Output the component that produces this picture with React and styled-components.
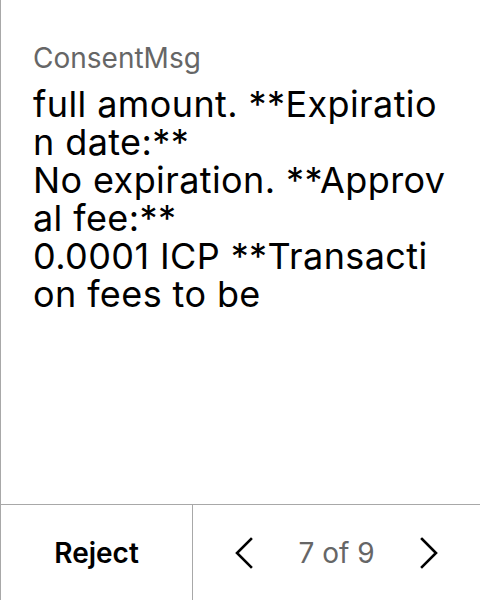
import React from 'react';
import styled, {createGlobalStyle} from 'styled-components';

const GlobalStyle = createGlobalStyle`
  html, body {
    margin: 0;
    padding: 0;
    background: #fff;
  }
  body {
    font-family: Inter, "Noto Sans", sans-serif;
    color: #000;
  }
`

const Screen = styled.div`
  width: 480px;
  height: 600px;
  display: flex;
  flex-direction: column;
  border-left: 1px solid #a8a8a8;
  box-sizing: border-box;
  overflow: hidden;
`

const Content = styled.div`
  flex: 1;
  padding: 42px 12px 0 32px;
  overflow: hidden;
`

const Title = styled.div`
  font-size: 28px;
  line-height: 32px;
  color: #666;
`

const Body = styled.div`
  font-size: 36px;
  line-height: 38px;
  letter-spacing: 0.4px;
  white-space: pre-line;
  word-break: break-all;
  margin-top: 11px;
`

const Footer = styled.div`
  height: 96px;
  box-sizing: border-box;
  flex-shrink: 0;
  border-top: 1px solid #a8a8a8;
  display: flex;
`

const RejectButton = styled.div`
  width: 191px;
  border-right: 1px solid #a8a8a8;
  display: flex;
  align-items: center;
  justify-content: center;
  font-size: 28px;
  font-weight: 600;
`

const Pager = styled.div`
  flex: 1;
  display: flex;
  align-items: center;
  justify-content: space-between;
  padding: 0 40px;
`

const PageLabel = styled.span`
  font-size: 28px;
  color: #666;
`

const Chevron = ({dir}) => (
    <svg width="22" height="32" viewBox="0 0 22 32" fill="none" stroke="#000" strokeWidth="2.6"
         strokeLinecap="square">
        {dir === 'left'
            ? <polyline points="18,2 4,16 18,30"/>
            : <polyline points="4,2 18,16 4,30"/>}
    </svg>
)

const text = `full amount. **Expiratio
n date:**
No expiration. **Approv
al fee:**
0.0001 ICP **Transacti
on fees to be`

export default function App() {
    return (
        <>
            <GlobalStyle/>
            <Screen>
                <Content>
                    <Title>ConsentMsg</Title>
                    <Body>{text}</Body>
                </Content>
                <Footer>
                    <RejectButton>Reject</RejectButton>
                    <Pager>
                        <Chevron dir="left"/>
                        <PageLabel>7 of 9</PageLabel>
                        <Chevron dir="right"/>
                    </Pager>
                </Footer>
            </Screen>
        </>
    )
}
